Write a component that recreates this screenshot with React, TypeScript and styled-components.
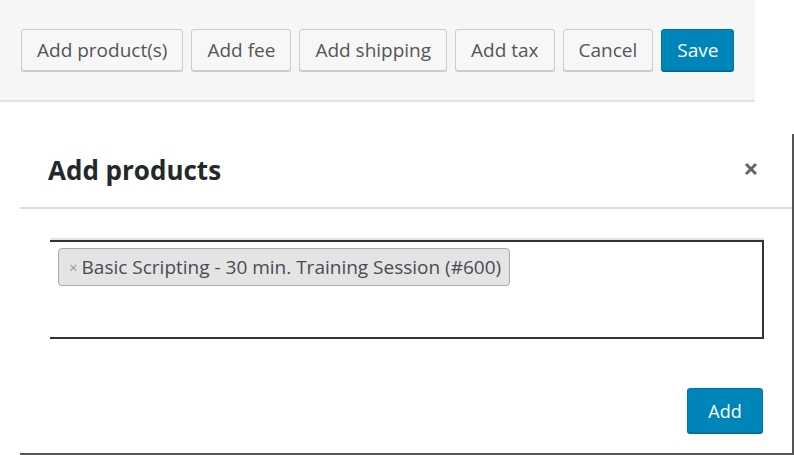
import React from "react";
import styled, { createGlobalStyle } from "styled-components";

const Global = createGlobalStyle`
  html, body { margin: 0; padding: 0; background: #ffffff; }
  body { font-family: "Open Sans", "Noto Sans", sans-serif; overflow: hidden; }
  * { box-sizing: border-box; }
`;

const Page = styled.div`
  width: 794px;
  height: 455px;
  display: flex;
  flex-direction: column;
`;

const Toolbar = styled.div`
  width: 755px;
  height: 102px;
  background: #f6f6f6;
  border-bottom: 2px solid #e3e3e3;
  display: flex;
  align-items: center;
  gap: 8px;
  padding: 0 0 0 21px;
`;

const Button = styled.button<{ $primary?: boolean }>`
  height: 42px;
  padding: 0 15px;
  border-radius: 3px;
  font-family: "Open Sans", "Noto Sans", sans-serif;
  font-size: 19px;
  line-height: 1;
  cursor: pointer;
  background: ${(p) => (p.$primary ? "#0085ba" : "#f7f7f7")};
  color: ${(p) => (p.$primary ? "#ffffff" : "#555555")};
  border: 1px solid ${(p) => (p.$primary ? "#0073aa" : "#cccccc")};
  box-shadow: 0 1px 0 ${(p) => (p.$primary ? "#006799" : "#cccccc")};
`;

const Modal = styled.div`
  margin: 32px 0 0 20px;
  width: 774px;
  flex: 1;
  background: #ffffff;
  border-right: 2px solid #555555;
  border-bottom: 2px solid #555555;
  display: flex;
  flex-direction: column;
`;

const Header = styled.div`
  height: 75px;
  border-bottom: 2px solid #dcdcdc;
  display: flex;
  align-items: center;
  justify-content: space-between;
  padding: 0 34px 0 28px;
`;

const Title = styled.h1`
  margin: 0 0 2px 0;
  font-size: 26px;
  font-weight: 700;
  color: #23282d;
  font-family: "Open Sans", "Noto Sans", sans-serif;
`;

const Close = styled.button`
  border: 0;
  background: transparent;
  padding: 0;
  margin-bottom: 3px;
  width: 14px;
  height: 14px;
  display: flex;
  cursor: pointer;
`;

const Body = styled.div`
  padding: 31px 28px 0 30px;
  display: flex;
  flex-direction: column;
`;

const SelectBox = styled.div`
  height: 99px;
  border-top: 2px solid #333333;
  border-right: 2px solid #333333;
  border-bottom: 2px solid #333333;
  box-shadow: 0 -2px 0 #e4e4e4;
  padding: 6px 8px;
  display: flex;
  align-items: flex-start;
`;

const Tag = styled.div`
  height: 38px;
  display: flex;
  align-items: center;
  gap: 4px;
  padding: 0 8px 0 10px;
  background: #e4e4e4;
  border: 1px solid #aaaaaa;
  border-radius: 4px;
  font-size: 19px;
  color: #4a4a55;
  font-family: "Open Sans", "Noto Sans", sans-serif;
`;

const TagRemove = styled.span`
  color: #999;
  font-size: 15px;
`;

const Footer = styled.div`
  display: flex;
  justify-content: flex-end;
  padding: 49px 29px 0 0;
`;

const AddButton = styled(Button)`
  height: 45px;
  width: 76px;
  padding: 0;
  font-size: 18px;
`;

export default function App() {
  return (
    <Page>
      <Global />
      <Toolbar>
        <Button>Add product(s)</Button>
        <Button>Add fee</Button>
        <Button>Add shipping</Button>
        <Button>Add tax</Button>
        <Button>Cancel</Button>
        <Button $primary>Save</Button>
      </Toolbar>
      <Modal>
        <Header>
          <Title>Add products</Title>
          <Close aria-label="Close">
            <svg width="14" height="14" viewBox="0 0 14 14">
              <path d="M2 2 L12 12 M12 2 L2 12" stroke="#666" strokeWidth="3" strokeLinecap="butt" />
            </svg>
          </Close>
        </Header>
        <Body>
          <SelectBox>
            <Tag>
              <TagRemove>×</TagRemove>
              Basic Scripting - 30 min. Training Session (#600)
            </Tag>
          </SelectBox>
        </Body>
        <Footer>
          <AddButton $primary>Add</AddButton>
        </Footer>
      </Modal>
    </Page>
  );
}
